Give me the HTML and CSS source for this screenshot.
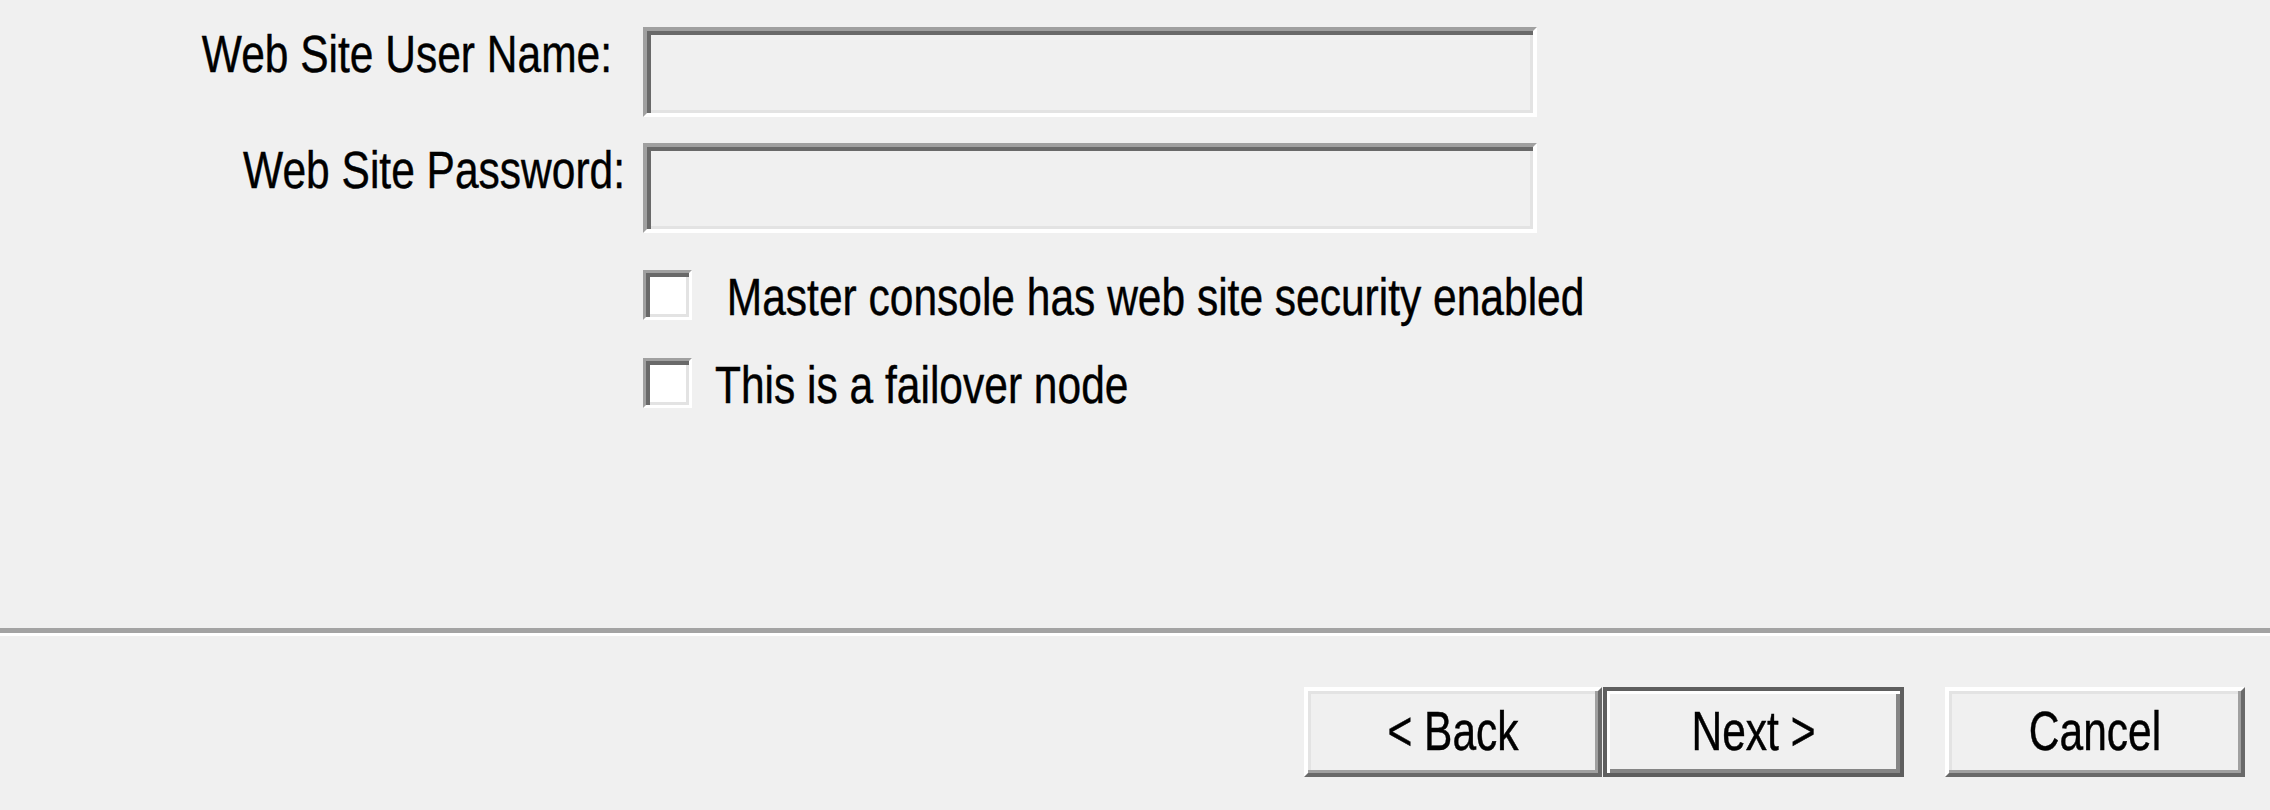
FILE: index.html
```html
<!DOCTYPE html>
<html lang="en">
<head>
<meta charset="utf-8">
<title>Web Site Credentials</title>
<link rel="stylesheet" href="styles.css">
</head>
<body>
<div class="dialog">
  <div class="main">
    <div class="field-row">
      <label class="field-label label-user" for="user">Web Site User Name:</label>
      <input class="textbox" id="user" type="text">
    </div>
    <div class="field-row">
      <label class="field-label label-pass" for="pass">Web Site Password:</label>
      <input class="textbox" id="pass" type="password">
    </div>
    <div class="checks">
      <label class="check-row">
        <span class="checkbox"></span>
        <span class="check-text">&nbsp;Master console has web site security enabled</span>
      </label>
      <label class="check-row">
        <span class="checkbox"></span>
        <span class="check-text">This is a failover node</span>
      </label>
    </div>
  </div>
  <div class="separator"></div>
  <div class="footer">
    <div class="nav-pair">
      <button class="btn" type="button"><span class="btn-text">&lt; Back</span></button>
      <button class="btn btn-default" type="button"><span class="btn-text">Next &gt;</span></button>
    </div>
    <button class="btn btn-cancel" type="button"><span class="btn-text">Cancel</span></button>
  </div>
</div>
</body>
</html>
```
FILE: styles.css
```css
* { box-sizing: border-box; }

html, body {
  margin: 0;
  padding: 0;
  background: #f0f0f0;
}

body {
  width: 2270px;
  height: 810px;
  overflow: hidden;
  font-family: "Liberation Sans", Arial, sans-serif;
  font-size: 42.5px;
  color: #000;
  -webkit-text-stroke: 0.35px #000;
}

.dialog {
  display: flex;
  flex-direction: column;
  height: 810px;
}

.main {
  height: 628px;
  padding-top: 27px;
  display: flex;
  flex-direction: column;
  gap: 26px;
}

.field-row {
  display: flex;
  align-items: flex-start;
}

.field-label {
  display: block;
  width: 643px;
  margin-top: 5px;
  text-align: right;
  line-height: 46px;
  white-space: nowrap;
  transform: scaleY(1.2);
}

.label-user { padding-right: 31px; }
.label-pass { padding-right: 18px; }

.textbox {
  width: 894px;
  height: 90px;
  margin: 0;
  padding: 0;
  font: inherit;
  background: #f0f0f0;
  border-style: solid;
  border-width: 4px;
  border-color: #a0a0a0 #ffffff #ffffff #a0a0a0;
  box-shadow: inset 4px 4px 0 #696969, inset -3px -3px 0 #e3e3e3;
  outline: none;
}

.checks {
  display: flex;
  flex-direction: column;
  gap: 38px;
  padding-left: 643px;
  margin-top: 11px;
}

.check-row {
  display: flex;
  align-items: center;
  height: 50px;
}

.checkbox {
  flex: none;
  width: 49px;
  height: 50px;
  background: #ffffff;
  border-style: solid;
  border-width: 3px;
  border-color: #a0a0a0 #ffffff #ffffff #a0a0a0;
  box-shadow: inset 4px 4px 0 #696969, inset -3px -3px 0 #e3e3e3;
}

.check-text {
  margin-left: 23px;
  margin-top: 6px;
  line-height: 60px;
  white-space: nowrap;
  transform: scaleY(1.2);
}

.separator {
  height: 8px;
  border-top: 5px solid #a3a3a3;
  border-bottom: 3px solid #ffffff;
}

.footer {
  display: flex;
  justify-content: flex-end;
  align-items: flex-start;
  gap: 41px;
  padding: 51px 25px 0 0;
}

.nav-pair {
  display: flex;
  gap: 1px;
}

.btn {
  width: 298px;
  height: 90px;
  margin: 0;
  padding: 0;
  font: inherit;
  color: #000;
  background: #f0f0f0;
  border-style: solid;
  border-width: 4px;
  border-color: #ffffff #696969 #696969 #ffffff;
  box-shadow: inset -3px -3px 0 #a0a0a0, inset 3px 3px 0 #e3e3e3;
  line-height: 60px;
  text-align: center;
}

.btn-default {
  width: 301px;
  border-color: #5e5e5e;
  box-shadow: inset 3px 3px 0 #ffffff, inset -4px -4px 0 #858585;
}

.btn-cancel {
  width: 300px;
}

.btn-text {
  display: inline-block;
  transform: scaleY(1.3);
}
```
